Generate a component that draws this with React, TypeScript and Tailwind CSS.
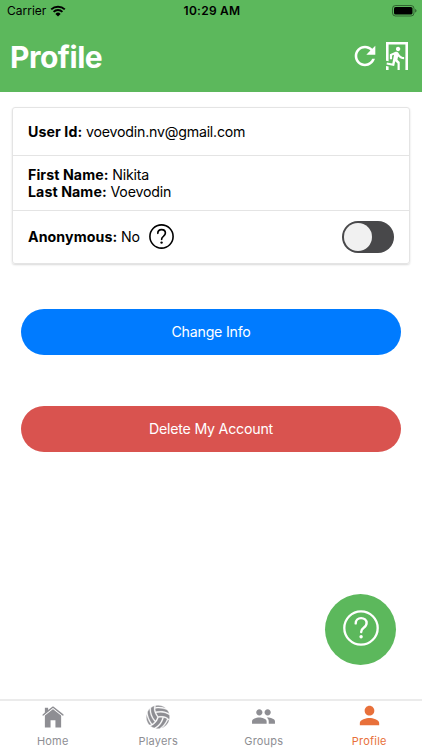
import React from 'react'
import { MdGroup, MdPerson } from 'react-icons/md'
import { IoIosHome, IoMdRefresh } from 'react-icons/io'
import { GiVolleyballBall } from 'react-icons/gi'

interface TabItemProps {
  label: string
  icon: React.ReactNode
  active?: boolean
}

interface IconProps {
  className?: string
}

function WifiIcon() {
  return (
    <svg viewBox="0 0 16 12" className="w-4 h-3" fill="none">
      <path d="M1.2 4.4a9.8 9.8 0 0 1 13.6 0M3.6 6.9a6.3 6.3 0 0 1 8.8 0" stroke="currentColor" strokeWidth="2" />
      <path d="M8 11.4 5.4 8.9a3.7 3.7 0 0 1 5.2 0z" fill="currentColor" />
    </svg>
  )
}

function BatteryIcon() {
  return (
    <svg viewBox="0 0 25 12" className="w-[25px] h-3" fill="none">
      <rect x="0.5" y="0.5" width="21.5" height="10.5" rx="3" stroke="currentColor" strokeOpacity="0.45" />
      <rect x="2" y="2" width="18.5" height="7.5" rx="1.6" fill="currentColor" />
      <path d="M23.2 4v3.6c.8-.3 1.3-1 1.3-1.8s-.5-1.5-1.3-1.8z" fill="currentColor" fillOpacity="0.5" />
    </svg>
  )
}

function ExitRunIcon() {
  return (
    <svg viewBox="4 1 17 22" preserveAspectRatio="none" className="w-[22px] h-7" fill="currentColor">
      <path d="M13.34,8.17C12.41,8.17 11.65,7.4 11.65,6.47A1.69,1.69 0 0,1 13.34,4.78C14.28,4.78 15.04,5.54 15.04,6.47C15.04,7.4 14.28,8.17 13.34,8.17M10.3,19.93L4.37,18.75L4.71,17.05L8.86,17.9L10.21,11.04L8.69,11.64V14.5H7V10.54L11.4,8.67L12.07,8.59C12.67,8.59 13.17,8.93 13.5,9.44L14.36,10.79C15.04,12 16.39,12.82 18,12.82V14.5C16.14,14.5 14.44,13.67 13.34,12.4L12.84,14.94L14.61,16.63V23H12.92V17.9L11.14,16.21L10.3,19.93M21,23H19V3H6V16.11L4,15.69V1H21V23M6,23H4V19.78L6,20.2V23Z" />
    </svg>
  )
}

function HelpIcon({ className }: IconProps) {
  return (
    <svg viewBox="0 0 36 36" className={className} fill="none" stroke="currentColor" strokeLinecap="round">
      <circle cx="18" cy="18" r="16.7" strokeWidth="2.3" />
      <path d="M12.7 13.4c0-3.1 2.3-5.3 5.4-5.3s5.5 2.1 5.5 5c0 2.2-1.1 3.4-2.9 4.7-1.9 1.3-2.5 2.2-2.5 4.3" strokeWidth="2.4" />
      <circle cx="18.1" cy="26.8" r="1.7" fill="currentColor" stroke="none" />
    </svg>
  )
}

function TabItem({ label, icon, active }: TabItemProps) {
  return (
    <button className={`flex flex-1 flex-col items-center ${active ? 'text-[#e8703a]' : 'text-[#8e8e93]'}`}>
      <span className="flex h-8 items-center justify-center">{icon}</span>
      <span className="text-[11px] leading-4 tracking-[0.2px]">{label}</span>
    </button>
  )
}

export default function App() {
  return (
    <div className="relative flex h-[750px] w-[422px] flex-col overflow-hidden bg-white font-['Inter','Liberation_Sans',sans-serif] text-black">
      <header className="h-[92px] bg-[#5cb85c]">
        <div className="grid h-[22px] grid-cols-3 items-center pl-[7px] pr-[5px] text-xs">
          <div className="flex items-center gap-1">
            <span>Carrier</span>
            <WifiIcon />
          </div>
          <div className="text-center font-semibold tracking-[0.25px]">10:29 AM</div>
          <div className="flex justify-end">
            <BatteryIcon />
          </div>
        </div>
        <div className="flex h-[70px] items-center justify-between pb-0.5 pl-[10px] pr-[14px] text-white">
          <h1 className="pt-0.5 text-[30px] font-bold leading-9 tracking-[-0.5px]">Profile</h1>
          <div className="flex items-center gap-1.5">
            <IoMdRefresh className="size-[30px]" />
            <ExitRunIcon />
          </div>
        </div>
      </header>

      <main className="flex-1">
        <section className="mx-3 mt-[15px] h-[157px] rounded-[3px] border border-[#e4e4e4] text-[14.2px] leading-[17.5px] tracking-[-0.22px] shadow-[0_1px_2px_rgba(0,0,0,0.15)] [&_b]:tracking-[0.08px]">
          <div className="flex h-12 items-center border-b border-[#e4e4e4] px-[15px]">
            <p><b>User Id:</b> voevodin.nv@gmail.com</p>
          </div>
          <div className="flex h-[55px] flex-col justify-center border-b border-[#e4e4e4] px-[15px]">
            <p><b>First Name:</b> Nikita</p>
            <p><b>Last Name:</b> Voevodin</p>
          </div>
          <div className="flex h-[52px] items-center px-[15px]">
            <p><b>Anonymous:</b> No</p>
            <HelpIcon className="mb-0.5 ml-[9px] size-[25px]" />
            <button className="ml-auto flex h-8 w-[52px] items-center rounded-full bg-[#48484a] p-[2px]">
              <span className="size-7 rounded-full bg-[#f1f1f1]" />
            </button>
          </div>
        </section>

        <div className="mx-[21px] mt-[45px] flex flex-col gap-[51px] text-[14.2px] tracking-[-0.22px] text-white">
          <button className="h-[46px] rounded-full bg-[#007bff]">Change Info</button>
          <button className="h-[46px] rounded-full bg-[#d9534f]">Delete My Account</button>
        </div>
      </main>

      <button className="absolute left-[325px] top-[594px] flex size-[71px] items-center justify-center rounded-full bg-[#5cb85c] pb-[3px] text-white">
        <HelpIcon className="size-9" />
      </button>

      <nav className="flex h-[51px] border-t-2 border-[#ebebeb]">
        <TabItem label="Home" icon={<IoIosHome className="mb-px size-[26px]" />} />
        <TabItem label="Players" icon={<GiVolleyballBall className="size-[26px] stroke-white stroke-[8px]" />} />
        <TabItem label="Groups" icon={<MdGroup className="mb-0.5 size-[25px]" />} />
        <TabItem label="Profile" icon={<MdPerson className="mb-[3px] size-[29px]" />} active />
      </nav>
    </div>
  )
}
